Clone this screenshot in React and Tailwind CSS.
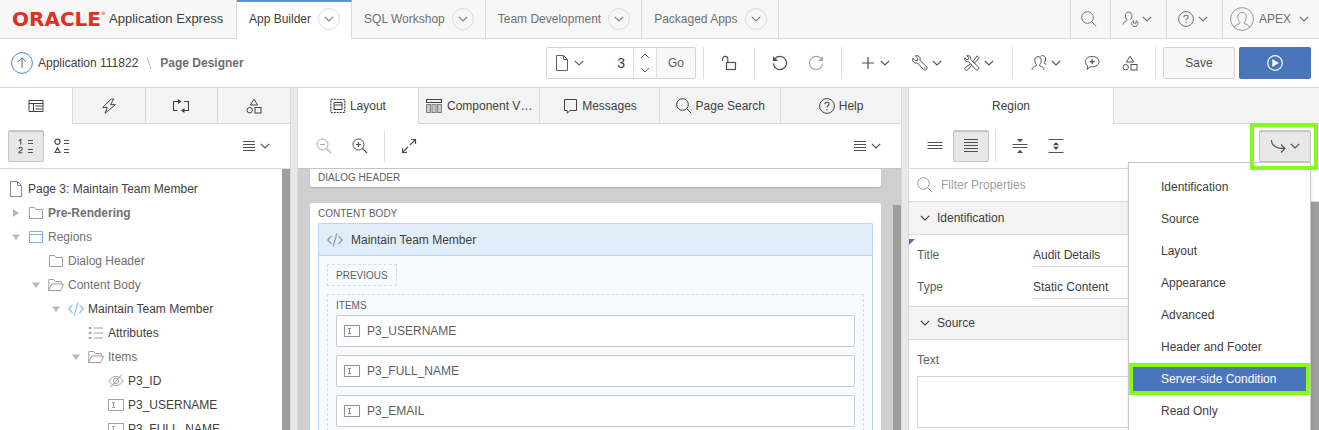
import React from "react";

function Svg({ w = 16, h = 16, className = "", children }) {
  return (
    <svg
      width={w}
      height={h}
      viewBox={`0 0 ${w} ${h}`}
      fill="none"
      stroke="currentColor"
      strokeWidth="1"
      className={`shrink-0 ${className}`}
      aria-hidden="true"
    >
      {children}
    </svg>
  );
}

const Chevron = ({ className }) => (
  <Svg w={10} h={6} className={className}>
    <path d="M.8.8 5 5 9.2.8" strokeWidth="1.2" />
  </Svg>
);
const ChevronUp = () => (
  <Svg w={10} h={6}>
    <path d="M1 5 5 1 9 5" />
  </Svg>
);
const ChevronDownSmall = () => (
  <Svg w={10} h={6}>
    <path d="M1 1 5 5 9 1" />
  </Svg>
);
const SearchIcon = ({ className }) => (
  <Svg className={className}>
    <circle cx="6.5" cy="6.5" r="5.8" />
    <path d="m10.8 10.8 4.4 4.4" />
  </Svg>
);
const ZoomIcon = ({ plus, className }) => (
  <Svg className={className}>
    <circle cx="6.5" cy="6.5" r="5.5" />
    <path d="m10.5 10.5 4.6 4.6M4 6.5h5" strokeWidth="1.2" />
    {plus && <path d="M6.5 4v5" strokeWidth="1.2" />}
  </Svg>
);
const HelpIcon = () => (
  <Svg>
    <circle cx="8" cy="8" r="7.4" />
    <path d="M5.9 6.3c0-1.3.9-2.1 2.1-2.1s2.1.8 2.1 1.9c0 1.5-2.1 1.6-2.1 3.4" strokeWidth="1.1" />
    <circle cx="8" cy="11.6" r=".7" fill="currentColor" stroke="none" />
  </Svg>
);
const PageIcon = ({ className }) => (
  <Svg className={className}>
    <path d="M2.5.5h7l4 4v11h-11zM9.5.5v4h4" />
  </Svg>
);
const LockOpen = () => (
  <Svg>
    <rect x="5.5" y="7.5" width="9" height="7" strokeWidth="1.2" />
    <path d="M1.6 6V4a2.6 2.6 0 0 1 5.2 0v3.2" strokeWidth="1.1" />
  </Svg>
);
const Undo = ({ className }) => (
  <Svg className={className}>
    <path d="M3 3.6A6.6 6.6 0 1 1 1.400 8.400" strokeWidth="1.2" />
    <path d="M1 1v5h5z" fill="currentColor" stroke="none" />
  </Svg>
);
const Plus = () => (
  <Svg>
    <path d="M8 2v12M2 8h12" strokeWidth="1.2" />
  </Svg>
);
const Wrench = () => (
  <Svg>
    <path d="M3.2.9 5.8 3.4 5.4 5.4 3.4 5.8.9 3.2C.1 5.200 1 7.100 2.700 7.900c1 .4 1.900.3 2.600 0l6.200 6.500c.8.8 2.100.8 2.900 0s.8-2.100 0-2.900L7.900 5.300c.4-.9.4-1.900 0-2.700C7.100.9 5.200.2 3.200.9z" />
    <circle cx="12.900" cy="12.900" r=".6" fill="currentColor" stroke="none" />
  </Svg>
);
const Tools = () => (
  <Svg>
    <path d="M2.800.8 4.600 2.500 4.300 4.300 2.500 4.600.8 2.800C.3 4.500 1 5.900 2.200 6.500c.8.3 1.500.3 2.100 0l7.400 8c.7.800 2 .8 2.700 0s.7-1.900 0-2.600L6.500 4.300c.3-.7.3-1.500 0-2.100C5.900 1 4.400.3 2.800.8z" />
    <path d="m13.200.8 2 2-4.700 5.400-1.600-1.400zM6.400 9l1.400 1.400-4.200 4.500c-.6.600-1.600.6-2.300 0s-.6-1.600 0-2.300z" />
  </Svg>
);
const People = () => (
  <Svg>
    <path d="M1 14.800c.4-2.300 1.900-3.300 4-3.800.7-.2.700-1 .2-1.600C4.200 8.300 3.800 7 3.800 5.500c0-2.500 1.200-3.900 3.200-3.900s3.200 1.400 3.200 3.900c0 1.500-.4 2.800-1.400 3.900-.5.600-.5 1.400.2 1.600 2.100.5 3.600 1.500 4 3.800" />
    <path d="M9.600 1.500c.5-.6 1.200-.9 2-.9 1.900 0 3 1.300 3 3.400 0 1.300-.4 2.400-1.100 3.200-.5.6-.4 1.300.2 1.500l1.600.7" />
  </Svg>
);
const UserWrench = () => (
  <Svg w={18}>
    <path d="M1 13.500c.3-2.100 1.600-3 3.500-3.400.7-.2.700-.9.200-1.500C3.800 7.600 3.400 6.400 3.400 5c0-2.400 1.200-3.900 3.300-3.900S10 2.600 10 5c0 1.400-.5 2.600-1.400 3.600" />
    <path d="M11.500 9.800v2.400h2.600V9.800c1.300.5 1.900 1.400 1.900 2.500 0 1.200-.8 2.100-1.900 2.400v1h-2.600v-1c-1.100-.3-1.900-1.200-1.900-2.400 0-1.100.6-2 1.900-2.500z" />
  </Svg>
);
const CommentPlus = () => (
  <Svg>
    <path d="M8.200 1.500c4 0 6.800 2.200 6.800 5.100s-2.900 5.200-6.800 5.200c-.7 0-1.300-.1-1.900-.2L3.200 14.500c.4-1.200.5-2.500.4-3.600C2.200 9.900 1.300 8.400 1.300 6.600c0-2.900 2.900-5.100 6.900-5.100z" />
    <path d="M8.200 4v5.200M5.600 6.600h5.200" strokeWidth="1.200" />
  </Svg>
);
const Shapes = () => (
  <Svg>
    <path d="M8 1.200 11.700 7H4.300z" />
    <circle cx="3.700" cy="12.200" r="2.700" />
    <rect x="9" y="9.500" width="6" height="5.500" />
  </Svg>
);
const Menu4 = () => (
  <Svg w={14} h={12}>
    <path d="M1 1.500h12M1 4.500h12M1 7.500h12M1 10.500h12" strokeWidth="1.100" />
  </Svg>
);
const PageDesign = () => (
  <Svg>
    <path d="M1 2.500h14v11H1zM1 5.500h14M5.500 5.500v8M7.500 8h7M7.500 11h7" />
  </Svg>
);
const Bolt = () => (
  <Svg>
    <path d="M10.500.800 1.700 9.400h4.500L4 15.300l10.400-8.600H9.600L12.600 1z" />
  </Svg>
);
const Process = () => (
  <Svg w={18}>
    <path d="M5.500 12.500h-4v-9H6M12 3.500h4.500v9H12" strokeWidth="1.100" />
    <path d="M6 1v5l3.500-2.500zM12.500 10v5L9 12.500z" fill="currentColor" stroke="none" />
  </Svg>
);
const LayoutIcon = () => (
  <Svg>
    <rect x=".8" y="1.500" width="14" height="13" strokeWidth="1.200" strokeDasharray="2 1" />
    <path d="M4 4.500h8v7H4zM4 7h8" />
  </Svg>
);
const ComponentIcon = () => (
  <Svg w={18}>
    <rect x="1.500" y="1.500" width="15" height="3" />
    <g stroke="#808080" fill="#c8c8c8">
      <rect x="1.500" y="6.500" width="4" height="8" />
      <rect x="7" y="6.500" width="4" height="8" />
      <rect x="12.500" y="6.500" width="4" height="8" />
    </g>
  </Svg>
);
const MessageIcon = () => (
  <Svg>
    <path d="M2.500 1.500h12v11H8.200l-3 2.700v-2.700H2.500z" />
  </Svg>
);
const Expand = () => (
  <Svg>
    <path d="M10 1.500h4.500V6M14.500 1.500 9 7M6 14.500H1.500V10M1.500 14.500 7 9" strokeWidth="1.200" />
  </Svg>
);
const Numbered = () => (
  <Svg>
    <path d="m.8 2.800 2-1.500v5.500" strokeWidth="1.100" />
    <path d="M.8 10.900c.1-1 .8-1.600 1.800-1.600s1.700.6 1.700 1.500c0 1.600-2.900 2-3.500 3.900h3.600" strokeWidth="1.100" />
    <path d="M10 2.500h5M10 5.500h5M10 11.500h5M10 14.500h5" />
  </Svg>
);
const ShapeList = () => (
  <Svg>
    <circle cx="3.500" cy="3.800" r="2.600" strokeWidth="1.200" />
    <path d="M3.500 9.800 6 14.500H1zM10 2.500h5M10 5.500h5M10 11.500h5M10 14.500h5" strokeWidth="1.200" />
  </Svg>
);
const Lines3 = () => (
  <Svg>
    <path d="M.5 4.500h15M.5 7.500h15M.5 10.500h15" strokeWidth="1.200" />
  </Svg>
);
const Lines5 = () => (
  <Svg>
    <path d="M1 1.500h14M1 4.500h14M1 7.500h14M1 10.500h14M1 13.500h14" strokeWidth="1.200" />
  </Svg>
);
const Collapse = () => (
  <Svg>
    <path d="M.5 6.500h15M.5 9.500h15" strokeWidth="1.200" />
    <path d="M5 1h6L8 4.200zM5 15h6L8 11.800z" fill="currentColor" stroke="none" />
  </Svg>
);
const ExpandAll = () => (
  <Svg>
    <path d="M.5 1.500h15M.5 14.500h15" strokeWidth="1.200" />
    <path d="M5 7.200h6L8 4zM5 8.800h6L8 12z" fill="currentColor" stroke="none" />
  </Svg>
);
const GoTo = () => (
  <Svg>
    <path d="M1.500 2c0 5.500 4.500 8.500 13 8.500M11 6.500l4 4-4 4" strokeWidth="1.100" />
  </Svg>
);
const Avatar = () => (
  <Svg w={24} h={24} className="text-[#999]">
    <circle cx="12" cy="12" r="11.400" />
    <path d="M4.500 20.300c.6-2.100 2.200-2.800 4.600-3.500 1-.3 1-1.200.4-1.900-1.100-1.300-1.700-2.700-1.700-4.600 0-3 1.500-4.900 4.200-4.900s4.200 1.900 4.200 4.900c0 1.900-.6 3.300-1.700 4.600-.6.700-.6 1.600.4 1.900 2.400.7 4 1.400 4.600 3.500" />
  </Svg>
);
const UpCircle = () => (
  <Svg w={22} h={22}>
    <circle cx="11" cy="11" r="10.400" stroke="#4c86e5" />
    <path d="M11 16V6M6.800 10 11 5.800l4.200 4.200" stroke="#666" />
  </Svg>
);
const RunIcon = () => (
  <Svg>
    <circle cx="8" cy="8" r="7.300" strokeWidth="1.200" />
    <path d="m5.300 4 6.500 4-6.500 4z" fill="currentColor" stroke="none" />
  </Svg>
);
const Folder = () => (
  <Svg>
    <path d="M1.500 2.500h5l1.500 2h6.500v9h-13z" />
  </Svg>
);
const FolderOpen = () => (
  <Svg>
    <path d="M.8 13.500v-11h5l1.500 2h6v2.500M.8 13.500 3.500 7h12l-2.700 6.500z" />
  </Svg>
);
const RegionIcon = () => (
  <Svg>
    <path d="M1.500 2.500h13v11h-13zM1.500 5.500h13" />
  </Svg>
);
const CodeIcon = () => (
  <Svg>
    <path d="M4.500 4 .8 8l3.700 4M11.500 4l3.700 4-3.700 4M9.800 1.500 6.200 14.500" strokeWidth="1.200" />
  </Svg>
);
const ListIcon = () => (
  <Svg>
    <path d="M6 3h9M6 8h9M6 13h9" />
    <path d="M.8 3h2.400M.8 8h2.400M.8 13h2.400" strokeWidth="2" />
  </Svg>
);
const Hidden = () => (
  <Svg>
    <path d="M.8 8C3 4.800 5.400 3.500 8 3.500s5 1.300 7.200 4.500C13 11.200 10.600 12.500 8 12.500S3 11.200.8 8zM2 14.500 14 1.500" />
    <circle cx="8" cy="8" r="2.600" />
  </Svg>
);
const Field = () => (
  <Svg>
    <path d="M.5 2.500h15v11H.5zM4 5.500h3M4 10.500h3M5.500 5.500v5" />
  </Svg>
);
const Triangle = ({ open }) => (
  <svg width="8" height="8" viewBox="0 0 8 8" className="shrink-0 text-[#b9b9b9]" aria-hidden="true">
    <path d={open ? "M0 1.500h8L4 7z" : "M1 0v8l6-4z"} fill="currentColor" />
  </svg>
);

function IconButton({ label, children, wide, className = "" }) {
  return (
    <button
      type="button"
      aria-label={label}
      className={`flex h-8 shrink-0 items-center justify-center gap-1 ${wide ? "w-[52px]" : "w-9"} ${className}`}
    >
      {children}
    </button>
  );
}

const Divider = ({ tight }) => (
  <span className={`h-8 w-px shrink-0 bg-[#dfdfdf] ${tight ? "mx-1.5" : "mx-[7px]"}`} />
);
const PRESSED = "rounded-xs border border-[#c6c6c6] bg-[#e8e8e8] shadow-[inset_0_1px_1px_#c4c4c4]";

function Header() {
  const tabs = ["App Builder", "SQL Workshop", "Team Development", "Packaged Apps"];
  return (
    <header className="flex h-[39px] shrink-0 bg-[#f7f7f7] text-[#707070]">
      <div className="flex w-[237px] shrink-0 items-center border-r border-b border-[#dadada] pl-3 text-[#404040]">
        <span className="flex w-[97px] font-['DejaVu_Sans'] text-[20px] leading-6 font-bold text-[#e0301e]">
          ORACLE<sup className="top-0 pt-1 text-[5px] leading-none font-normal">®</sup>
        </span>
        <span className="text-[13px] leading-6">Application Express</span>
      </div>
      <nav className="flex shrink-0">
        {tabs.map((t, i) => (
          <div
            key={t}
            className={`flex items-center gap-[7px] border-r pr-[11px] pl-3 ${
              i === 0
                ? "border-t-2 border-t-[#5a8fe6] border-r-[#dadada] bg-white pb-[3px] text-[#404040]"
                : "border-b border-[#dadada]"
            }`}
          >
            <a href="#" className="whitespace-nowrap">{t}</a>
            <button
              type="button"
              aria-label={`${t} menu`}
              className="flex size-[22px] items-center justify-center rounded-full border border-[#dcdcdc] text-[#808080]"
            >
              <Chevron />
            </button>
          </div>
        ))}
      </nav>
      <div className="flex-1 border-b border-[#dadada]" />
      <div className="flex shrink-0">
        <button type="button" aria-label="Search" className="flex w-10 items-center justify-center border-b border-l border-[#dadada] pr-1">
          <SearchIcon />
        </button>
        <button type="button" aria-label="Administration" className="flex w-14 items-center justify-center gap-0.5 border-b border-l border-[#dadada] pr-1">
          <UserWrench />
          <Chevron />
        </button>
        <button type="button" aria-label="Help menu" className="flex w-14 items-center justify-center gap-1 border-b border-l border-[#dadada] pr-1">
          <HelpIcon />
          <Chevron />
        </button>
        <button type="button" className="flex w-[97px] items-center border-b border-l border-[#dadada] pl-[7px]">
          <Avatar />
          <span className="pr-2 pl-[5px]">APEX</span>
          <Chevron />
        </button>
      </div>
    </header>
  );
}

function ActionBar() {
  return (
    <div className="flex h-[49px] shrink-0 items-center border-b border-[#dadada] pr-2 pl-[11px] text-[#505050]">
      <a href="#" aria-label="Up"><UpCircle /></a>
      <nav className="flex flex-1 items-center pl-[5px] whitespace-nowrap">
        <a href="#" className="text-[#404040]">Application 111822</a>
        <Svg w={6} h={14} className="mx-2 text-[#b8b8b8]">
          <path d="m1 1 4 12" />
        </Svg>
        <span className="font-bold text-[#707070]">Page Designer</span>
      </nav>
      <div className="flex h-8 w-[150px] shrink-0 rounded-xs border border-[#d4d4d4] text-[#606060]">
        <button type="button" aria-label="Page list" className="flex items-center gap-1 pl-[7px]">
          <PageIcon />
          <Chevron />
        </button>
        <input
          aria-label="Page number"
          defaultValue="3"
          className="w-0 min-w-0 flex-1 pr-2 text-right text-sm text-[#404040] outline-none"
        />
        <div className="flex w-6 flex-col items-center justify-center gap-2 border-x border-[#e0e0e0]">
          <button type="button" aria-label="Next page"><ChevronUp /></button>
          <button type="button" aria-label="Previous page"><ChevronDownSmall /></button>
        </div>
        <button type="button" className="w-[38px] bg-[#f8f8f8]">Go</button>
      </div>
      <Divider />
      <IconButton label="Unlocked"><LockOpen /></IconButton>
      <Divider />
      <IconButton label="Undo"><Undo /></IconButton>
      <IconButton label="Redo" className="text-[#a8a8a8]"><Undo className="-scale-x-100" /></IconButton>
      <Divider />
      <IconButton label="Create" wide><Plus /><Chevron /></IconButton>
      <IconButton label="Utilities" wide><Wrench /><Chevron /></IconButton>
      <IconButton label="Settings" wide><Tools /><Chevron /></IconButton>
      <Divider />
      <IconButton label="Team" wide><People /><Chevron /></IconButton>
      <div className="flex gap-0.5 pl-0.5">
        <IconButton label="Add comment"><CommentPlus /></IconButton>
        <IconButton label="Shared components"><Shapes /></IconButton>
      </div>
      <Divider />
      <div className="flex shrink-0 gap-1">
        <button type="button" className="h-8 w-[72px] rounded-xs border border-[#d4d4d4] bg-[#f8f8f8]">Save</button>
        <button type="button" aria-label="Run page" className="flex h-8 w-[72px] items-center justify-center rounded-xs bg-[#4b75bb] text-white">
          <RunIcon />
        </button>
      </div>
    </div>
  );
}

function Tabs({ items }) {
  return (
    <div className="flex h-9 shrink-0 text-[#404040]">
      {items.map(({ label, icon, hideLabel }, i) => (
        <button
          key={label}
          type="button"
          aria-label={label}
          className={`flex min-w-0 flex-1 items-center justify-center gap-1 whitespace-nowrap ${
            i < items.length - 1 ? "border-r border-r-[#dadada]" : ""
          } ${i === 0 ? "bg-white" : "border-b border-b-[#dadada] bg-[#f3f3f3]"}`}
        >
          {icon}
          {!hideLabel && <span>{label}</span>}
        </button>
      ))}
    </div>
  );
}

const TREE = [
  { label: "Page 3: Maintain Team Member", icon: <PageIcon className="text-[#888]" />, pad: "pl-1", tone: "text-[#404040]", root: true },
  { label: "Pre-Rendering", icon: <Folder />, pad: "pl-2", tone: "font-bold text-[#707070]", arrow: "closed" },
  { label: "Regions", icon: <RegionIcon />, pad: "pl-2", tone: "text-[#707070]", arrow: "open", iconTone: "text-[#7fabf0]" },
  { label: "Dialog Header", icon: <Folder />, pad: "pl-7", tone: "text-[#707070]" },
  { label: "Content Body", icon: <FolderOpen />, pad: "pl-7", tone: "text-[#707070]", arrow: "open" },
  { label: "Maintain Team Member", icon: <CodeIcon />, pad: "pl-12", tone: "text-[#404040]", arrow: "open", iconTone: "text-[#93bdf3]" },
  { label: "Attributes", icon: <ListIcon />, pad: "pl-[68px]", tone: "text-[#404040]" },
  { label: "Items", icon: <FolderOpen />, pad: "pl-[68px]", tone: "text-[#707070]", arrow: "open" },
  { label: "P3_ID", icon: <Hidden />, pad: "pl-[88px]", tone: "text-[#404040]" },
  { label: "P3_USERNAME", icon: <Field />, pad: "pl-[88px]", tone: "text-[#404040]" },
  { label: "P3_FULL_NAME", icon: <Field />, pad: "pl-[88px]", tone: "text-[#404040]" },
];

function TreePanel() {
  return (
    <section className="flex w-[290px] shrink-0 flex-col">
      <Tabs
        items={[
          { label: "Rendering", icon: <PageDesign />, hideLabel: true },
          { label: "Dynamic Actions", icon: <Bolt />, hideLabel: true },
          { label: "Processing", icon: <Process />, hideLabel: true },
          { label: "Page Shared Components", icon: <Shapes />, hideLabel: true },
        ]}
      />
      <div className="flex h-[45px] shrink-0 items-center border-b border-[#dadada] px-2 text-[#505050]">
        <IconButton label="Group by Processing Order" className={PRESSED}><Numbered /></IconButton>
        <IconButton label="Group by Component Type"><ShapeList /></IconButton>
        <IconButton label="Tree menu" wide className="ml-auto"><Menu4 /><Chevron /></IconButton>
      </div>
      <div className="flex min-h-0 flex-1">
        <ul role="tree" aria-label="Page components" className="min-w-0 flex-1 overflow-hidden pt-2">
          {TREE.map((n, i) => (
            <li key={i} role="treeitem" className={`flex h-6 items-center whitespace-nowrap ${n.pad} ${n.tone}`}>
              {!n.root && (
                <span className="flex w-4 shrink-0 justify-center">
                  {n.arrow && <Triangle open={n.arrow === "open"} />}
                </span>
              )}
              <span className={`flex w-6 shrink-0 justify-center ${n.iconTone || "text-[#a0a0a0]"}`}>{n.icon}</span>
              {n.label}
            </li>
          ))}
        </ul>
        <div className="w-2 shrink-0 bg-[#9e9e9e]" />
      </div>
    </section>
  );
}

const Splitter = () => <div className="w-2 shrink-0 border-x border-[#dadada] bg-[#e8e8e8]" />;

function LayoutPanel() {
  return (
    <section className="flex min-w-0 flex-1 flex-col">
      <Tabs
        items={[
          { label: "Layout", icon: <LayoutIcon /> },
          { label: "Component V…", icon: <ComponentIcon /> },
          { label: "Messages", icon: <MessageIcon /> },
          { label: "Page Search", icon: <SearchIcon /> },
          { label: "Help", icon: <HelpIcon /> },
        ]}
      />
      <div className="flex h-[45px] shrink-0 items-center border-b border-[#c4c4c4] px-2 text-[#505050]">
        <IconButton label="Zoom out" className="text-[#a8a8a8]"><ZoomIcon /></IconButton>
        <IconButton label="Zoom in"><ZoomIcon plus /></IconButton>
        <Divider tight />
        <IconButton label="Expand"><Expand /></IconButton>
        <IconButton label="Layout menu" wide className="ml-auto"><Menu4 /><Chevron /></IconButton>
      </div>
      <div className="flex min-h-0 flex-1 bg-[#cfcfcf]">
        <div className="flex min-w-0 flex-1 flex-col gap-4 px-3 text-[#606060]">
          <div className="h-[18px] shrink-0 rounded-b-xs bg-white px-2 text-[10px] leading-[18px] shadow-[0_1px_1px_#b0b0b0]">
            DIALOG HEADER
          </div>
          <div className="flex min-h-0 flex-1 flex-col rounded-t-xs bg-white px-2">
            <div className="h-5 shrink-0 text-[10px] leading-[22px]">CONTENT BODY</div>
            <div className="flex min-h-0 flex-1 flex-col rounded-t-xs border border-b-0 border-[#b9d6f5] bg-[#f7fbff]">
              <div className="flex h-8 shrink-0 items-center gap-2 border-b border-[#b9d6f5] bg-[#e1edf9] px-2 text-[#404040]">
                <span className="text-[#8f9dac]"><CodeIcon /></span>
                Maintain Team Member
              </div>
              <div className="flex min-h-0 flex-1 flex-col items-start gap-2 px-2 pt-2">
                <div className="h-[22px] shrink-0 border border-dashed border-[#cfdff0] px-2 text-[10px] leading-[22px]">
                  PREVIOUS
                </div>
                <div className="flex w-full shrink-0 flex-col border border-dashed border-[#d3dfeb] px-2 pb-2">
                  <div className="h-5 text-[10px] leading-[22px]">ITEMS</div>
                  <ul className="flex flex-col gap-2">
                    {["P3_USERNAME", "P3_FULL_NAME", "P3_EMAIL"].map((n) => (
                      <li key={n} className="flex h-8 items-center gap-[7px] rounded-xs border border-[#c4cacf] bg-white px-[7px]">
                        <span className="text-[#909090]"><Field /></span>
                        {n}
                      </li>
                    ))}
                  </ul>
                </div>
              </div>
            </div>
          </div>
        </div>
        <div className="w-2 shrink-0 pt-9">
          <div className="h-full bg-[#9e9e9e]" />
        </div>
      </div>
    </section>
  );
}

function GoToMenu() {
  const items = ["Identification", "Source", "Layout", "Appearance", "Advanced", "Header and Footer", "Server-side Condition", "Read Only"];
  return (
    <ul role="menu" className="absolute top-full right-0 z-10 w-[183px] border border-[#c8c8c8] bg-white pt-2 pb-2 shadow-sm">
      {items.map((t) => {
        const active = t === "Server-side Condition";
        return (
          <li key={t} role="none">
            <button
              type="button"
              role="menuitem"
              className={`flex h-8 w-full items-center text-left whitespace-nowrap ${
                active ? "border-4 border-[#87fb1c] bg-[#4b75bb] pl-7 text-white" : "pl-8 text-[#404040]"
              }`}
            >
              {t}
            </button>
          </li>
        );
      })}
    </ul>
  );
}

function Section({ title, children }) {
  return (
    <div>
      <h2>
        <button type="button" className="flex h-8 w-full items-center gap-[7px] bg-[#f3f3f3] pl-[11px] text-[#404040]">
          <Chevron />
          {title}
        </button>
      </h2>
      {children}
    </div>
  );
}

function PropertyPanel() {
  return (
    <section className="flex w-[410px] shrink-0 flex-col">
      <div className="flex h-9 shrink-0">
        <button type="button" className="w-[205px] border-r border-[#dadada] text-[#404040]">Region</button>
        <div className="flex-1 border-b border-[#dadada] bg-[#f3f3f3]" />
      </div>
      <div className="flex h-[45px] shrink-0 items-center border-b border-[#dadada] px-2 text-[#505050]">
        <IconButton label="Show common"><Lines3 /></IconButton>
        <IconButton label="Show all" className={PRESSED}><Lines5 /></IconButton>
        <Divider tight />
        <IconButton label="Collapse all"><Collapse /></IconButton>
        <IconButton label="Expand all"><ExpandAll /></IconButton>
        <div className="relative ml-auto">
          <IconButton label="Go to group" wide className={PRESSED}><GoTo /><Chevron /></IconButton>
          <GoToMenu />
          <span className="pointer-events-none absolute -top-[7px] -right-[7px] -bottom-2 -left-[9px] z-20 border-4 border-[#87fb1c]" />
        </div>
      </div>
      <label className="flex h-[33px] shrink-0 items-center gap-2 border-b border-[#dadada] px-2 text-[#909090]">
        <SearchIcon />
        <input aria-label="Filter Properties" placeholder="Filter Properties" className="flex-1 outline-none placeholder:text-[#a0a0a0]" />
      </label>
      <div className="flex min-h-0 flex-1">
        <div className="min-w-0 flex-1 text-[#606060]">
          <Section title="Identification">
            <div className="border-y border-[#dadada] pb-[7px]">
              <svg width="6" height="6" viewBox="0 0 6 6" className="mt-1 block text-[#4b75bb]" aria-hidden="true">
                <path d="M0 0h6L0 6z" fill="currentColor" />
              </svg>
              <div className="-mt-0.5 flex h-6 items-center pl-2">
                <label htmlFor="title" className="w-[116px]">Title</label>
                <input id="title" defaultValue="Audit Details" className="h-6 flex-1 border-b border-[#dadada] text-[#404040] outline-none" />
              </div>
              <div className="mt-2 flex h-6 items-center pl-2">
                <label htmlFor="type" className="w-[116px]">Type</label>
                <select id="type" className="h-6 flex-1 appearance-none border-b border-[#dadada] bg-transparent text-[#404040] outline-none">
                  <option>Static Content</option>
                </select>
              </div>
            </div>
          </Section>
          <Section title="Source">
            <div className="flex flex-col gap-2 border-t border-[#dadada] px-2 pt-3">
              <label htmlFor="source-text" className="leading-4">Text</label>
              <textarea id="source-text" className="h-[52px] w-full resize-none border border-[#d4d4d4] outline-none" />
            </div>
          </Section>
        </div>
        <div className="w-2 shrink-0 bg-[#9e9e9e]" />
      </div>
    </section>
  );
}

export default function App() {
  return (
    <div className="flex h-screen flex-col overflow-hidden bg-white font-['Liberation_Sans',Arial,sans-serif] text-xs">
      <Header />
      <ActionBar />
      <main className="flex min-h-0 flex-1">
        <TreePanel />
        <Splitter />
        <LayoutPanel />
        <Splitter />
        <PropertyPanel />
      </main>
    </div>
  );
}
